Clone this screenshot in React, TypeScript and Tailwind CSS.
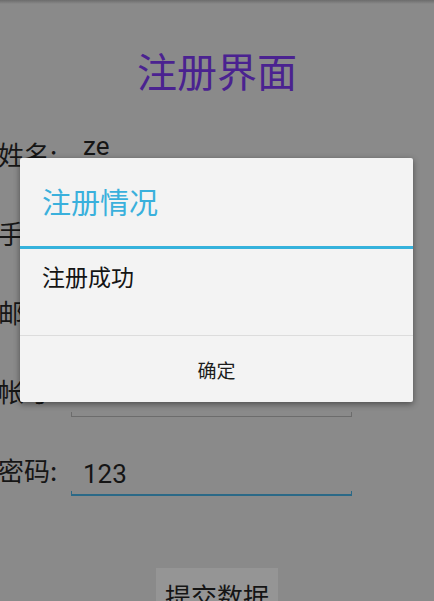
import React from "react"

const cjk = { fontFamily: '"Noto Sans CJK SC", "Noto Sans", sans-serif' }
const latin = { fontFamily: 'Roboto, "Noto Sans CJK SC", sans-serif' }

type Field = { label: string; value?: string; focused?: boolean; shift: string }

const FIELDS: Field[] = [
  { label: "姓名:", value: "ze", shift: "-translate-y-[8px]" },
  { label: "手机:", shift: "translate-y-[4px]" },
  { label: "邮箱:", shift: "translate-y-[4px]" },
  { label: "帐号:", shift: "translate-y-[4px]" },
  { label: "密码:", value: "123", focused: true, shift: "translate-y-[4px]" },
]

function FieldRow({ field }: { field: Field }) {
  const line = field.focused ? "border-[#2b6987] border-b-2" : "border-[#6c6c6c]"
  return (
    <div className="flex h-[79px] items-start">
      <div className="ml-[-2px] mt-[21px] w-[73px] shrink-0 text-[26px] leading-[36px] text-[#161616]" style={cjk}>
        {field.label}
      </div>
      <div className="mt-[21px] w-[281px]">
        <div className={`h-[36px] pl-[12px] text-[26px] leading-[36px] text-[#151515] ${field.shift}`} style={latin}>
          {field.value ?? ""}
        </div>
        <div className={`mt-[3px] h-[5px] border-x border-b ${line}`} />
      </div>
    </div>
  )
}

export default function App() {
  return (
    <div className="relative h-[601px] w-[434px] overflow-hidden bg-[#8a8a8a]" style={cjk}>
      <div className="h-[4px] bg-gradient-to-b from-[#6c6c6c] to-[#8a8a8a]" />
      <h1 className="pt-[38px] text-center text-[40px] leading-[56px] text-[#4a2290]">注册界面</h1>

      <div className="mt-[17px]">
        {FIELDS.map((f) => (
          <FieldRow key={f.label} field={f} />
        ))}
      </div>

      <div className="mt-[58px] flex justify-center">
        <div className="bg-[#959595] px-[9px] pt-[8px] text-[26px] leading-[40px] text-[#151515]">提交数据</div>
      </div>

      {/* dialog */}
      <div className="absolute left-[20px] top-[158px] flex h-[244px] w-[393px] flex-col rounded-[2px] bg-[#f3f3f3] shadow-[0_2px_6px_rgba(0,0,0,0.45)]">
        <div className="flex h-[88px] items-center pl-[22px] text-[29px] text-[#3ab0dc]">注册情况</div>
        <div className="h-[3px] bg-[#35b2dc]" />
        <div className="h-[87px] border-b border-[#dcdcdc] pl-[22px] pt-[11px] text-[23px] leading-[32px] text-[#141414]">
          注册成功
        </div>
        <div className="flex flex-1 items-center justify-center pt-[2px] text-[19px] text-[#1c1c1c]">确定</div>
      </div>
    </div>
  )
}
